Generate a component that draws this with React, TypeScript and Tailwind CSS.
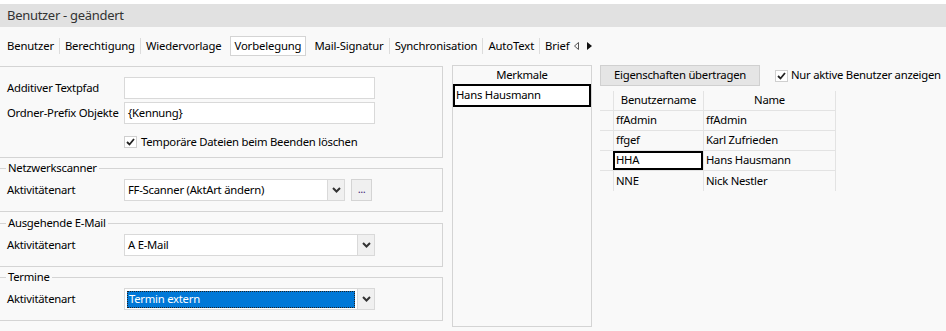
import React from 'react';

const FONT = { fontFamily: '"Segoe UI", "Noto Sans", "Open Sans", sans-serif' };

function Chevron() {
  return (
    <svg width="9" height="6" viewBox="0 0 9 6" className="text-[#333]">
      <path d="M1 1 L4.5 4.5 L8 1" fill="none" stroke="currentColor" strokeWidth="2" />
    </svg>
  );
}

function Check() {
  return (
    <span className="w-[13px] h-[12px] bg-white border border-[#cfcfcf] flex items-center justify-center shrink-0">
      <svg width="9" height="8" viewBox="0 0 9 8">
        <path d="M1 4 L3.5 6.5 L8 1" fill="none" stroke="#222" strokeWidth="1.8" />
      </svg>
    </span>
  );
}

function Select({ value, width, selected }: { value: string; width: string; selected?: boolean }) {
  return (
    <div className={`${width} h-[22px] bg-white border border-[#d9d9d9] flex shrink-0`}>
      <div className="flex-1 flex items-center pl-[2px] pr-[2px]">
        {selected ? (
          <div className="w-full h-[17px] bg-[#0078d7] text-white border border-dotted border-[#222] flex items-center pl-[1px] leading-none">
            {value}
          </div>
        ) : (
          <span className="pl-[1px]">{value}</span>
        )}
      </div>
      <div className="w-[17px] bg-[#f0f0f0] border-l border-[#d9d9d9] flex items-center justify-center">
        <Chevron />
      </div>
    </div>
  );
}

function Group({ title, children }: { title: string; children: React.ReactNode }) {
  return (
    <fieldset className="border border-l-0 border-[#d4d4d4] pt-[4px] pb-[10px]">
      <legend className="ml-[6px] px-[2px] leading-[14px]">{title}</legend>
      {children}
    </fieldset>
  );
}

function Tab({ label, active, last }: { label: string; active?: boolean; last?: boolean }) {
  if (active) {
    return (
      <div className="h-[20px] px-[4px] bg-white border border-[#d4d4d4] flex items-center mx-[5px]">{label}</div>
    );
  }
  return (
    <div className="flex items-center">
      <span className="px-[3px]">{label}</span>
      {!last && <span className="w-px h-[16px] bg-[#dcdcdc] mx-[2px]" />}
    </div>
  );
}

const users = [
  ['ffAdmin', 'ffAdmin'],
  ['ffgef', 'Karl Zufrieden'],
  ['HHA', 'Hans Hausmann'],
  ['NNE', 'Nick Nestler'],
];

export default function App() {
  return (
    <div className="w-[946px] h-[331px] bg-[#f9f9f9] overflow-hidden text-[11.3px] tracking-[-0.25px] text-black whitespace-nowrap" style={FONT}>
      <div className="h-[4px] bg-white" />
      <div className="h-[23px] bg-[#e1e1e1] pl-[7px] flex items-center text-[13px] tracking-[-0.3px] text-[#333]">Benutzer - geändert</div>

      <div className="h-[38px] flex items-center pl-[4px] tracking-[-0.15px]">
        <Tab label="Benutzer" />
        <Tab label="Berechtigung" />
        <Tab label="Wiedervorlage" last />
        <Tab label="Vorbelegung" active />
        <Tab label="Mail-Signatur" />
        <Tab label="Synchronisation" />
        <Tab label="AutoText" />
        <div className="flex items-center">
          <span className="px-[3px]">Brief</span>
          <svg width="5" height="8" viewBox="0 0 5 8" className="ml-[1px]">
            <path d="M4.5 0.5 L0.5 4 L4.5 7.5 Z" fill="none" stroke="#555" strokeWidth="1" />
          </svg>
          <svg width="5" height="8" viewBox="0 0 5 8" className="ml-[8px]">
            <path d="M0 0 L5 4 L0 8 Z" fill="#111" />
          </svg>
        </div>
      </div>

      <div className="flex">
        {/* left column */}
        <div className="w-[443px] shrink-0 flex flex-col">
          <div className="mt-px h-[92px] border border-l-0 border-[#d4d4d4] pt-[10px] flex flex-col">
            <div className="flex items-center h-[22px]">
              <span className="w-[124px] pl-[7px]">Additiver Textpfad</span>
              <div className="w-[251px] h-[22px] bg-white border border-[#d9d9d9]" />
            </div>
            <div className="flex items-center h-[22px] mt-[3px]">
              <span className="w-[124px] pl-[7px]">Ordner-Prefix Objekte</span>
              <div className="w-[251px] h-[22px] bg-white border border-[#d9d9d9] flex items-center pl-[3px]">{'{Kennung}'}</div>
            </div>
            <div className="flex items-center mt-[10px] pl-[124px] gap-[4px]">
              <Check />
              <span>Temporäre Dateien beim Beenden löschen</span>
            </div>
          </div>

          <div className="mt-[3px]">
            <Group title="Netzwerkscanner">
              <div className="flex items-center">
                <span className="w-[124px] pl-[7px]">Aktivitätenart</span>
                <Select value="FF-Scanner (AktArt ändern)" width="w-[221px]" />
                <div className="ml-[6px] w-[21px] h-[22px] bg-[#f0f0f0] border border-[#d4d4d4] flex items-end justify-center pb-[6px]">
                  <span className="leading-none tracking-[-0.5px] text-[#4a2a7a]">...</span>
                </div>
              </div>
            </Group>
          </div>

          <div className="mt-[4px]">
            <Group title="Ausgehende E-Mail">
              <div className="flex items-center">
                <span className="w-[124px] pl-[7px]">Aktivitätenart</span>
                <Select value="A E-Mail" width="w-[251px]" />
              </div>
            </Group>
          </div>

          <div className="mt-[3px]">
            <Group title="Termine">
              <div className="flex items-center">
                <span className="w-[124px] pl-[7px]">Aktivitätenart</span>
                <Select value="Termin extern" width="w-[251px]" selected />
              </div>
            </Group>
          </div>
        </div>

        {/* Merkmale */}
        <div className="ml-[9px] w-[140px] h-[262px] shrink-0 border border-[#d4d4d4] flex flex-col">
          <div className="h-[18px] flex items-center justify-center">Merkmale</div>
          <div className="h-[23px] border-2 border-black bg-white flex items-center pl-[1px]">Hans Hausmann</div>
        </div>

        {/* right */}
        <div className="ml-[8px] flex flex-col shrink-0">
          <div className="flex items-center">
            <div className="w-[160px] h-[21px] bg-[#e5e5e5] border border-[#d0d0d0] flex items-center justify-center">
              Eigenschaften übertragen
            </div>
            <div className="ml-[15px] flex items-center gap-[3px]">
              <Check />
              <span>Nur aktive Benutzer anzeigen</span>
            </div>
          </div>

          <div className="mt-[5px] flex flex-col">
            <div className="flex h-[20px]">
              <div className="w-[13px] border-b border-[#e3e3e3]" />
              <div className="w-[90px] border-l border-b border-[#e3e3e3] flex items-center justify-center">Benutzername</div>
              <div className="w-[133px] border-l border-r border-b border-[#e3e3e3] flex items-center justify-center">Name</div>
            </div>
            {users.map(([u, n], i) => (
              <div key={u} className="flex h-[20px]">
                <div className={`w-[13px] ${i < 3 ? 'border-b' : ''} border-[#e3e3e3]`} />
                <div className={`w-[90px] border-l ${i < 3 ? 'border-b' : ''} border-[#e3e3e3] flex`}>
                  {u === 'HHA' ? (
                    <div className="flex-1 border-2 border-black bg-white flex items-center pl-px -ml-px">{u}</div>
                  ) : (
                    <div className="flex items-center pl-[2px]">{u}</div>
                  )}
                </div>
                <div className={`w-[133px] border-l border-r ${i < 3 ? 'border-b' : ''} border-[#e3e3e3] flex items-center pl-[2px]`}>{n}</div>
              </div>
            ))}
          </div>
        </div>
      </div>
    </div>
  );
}
